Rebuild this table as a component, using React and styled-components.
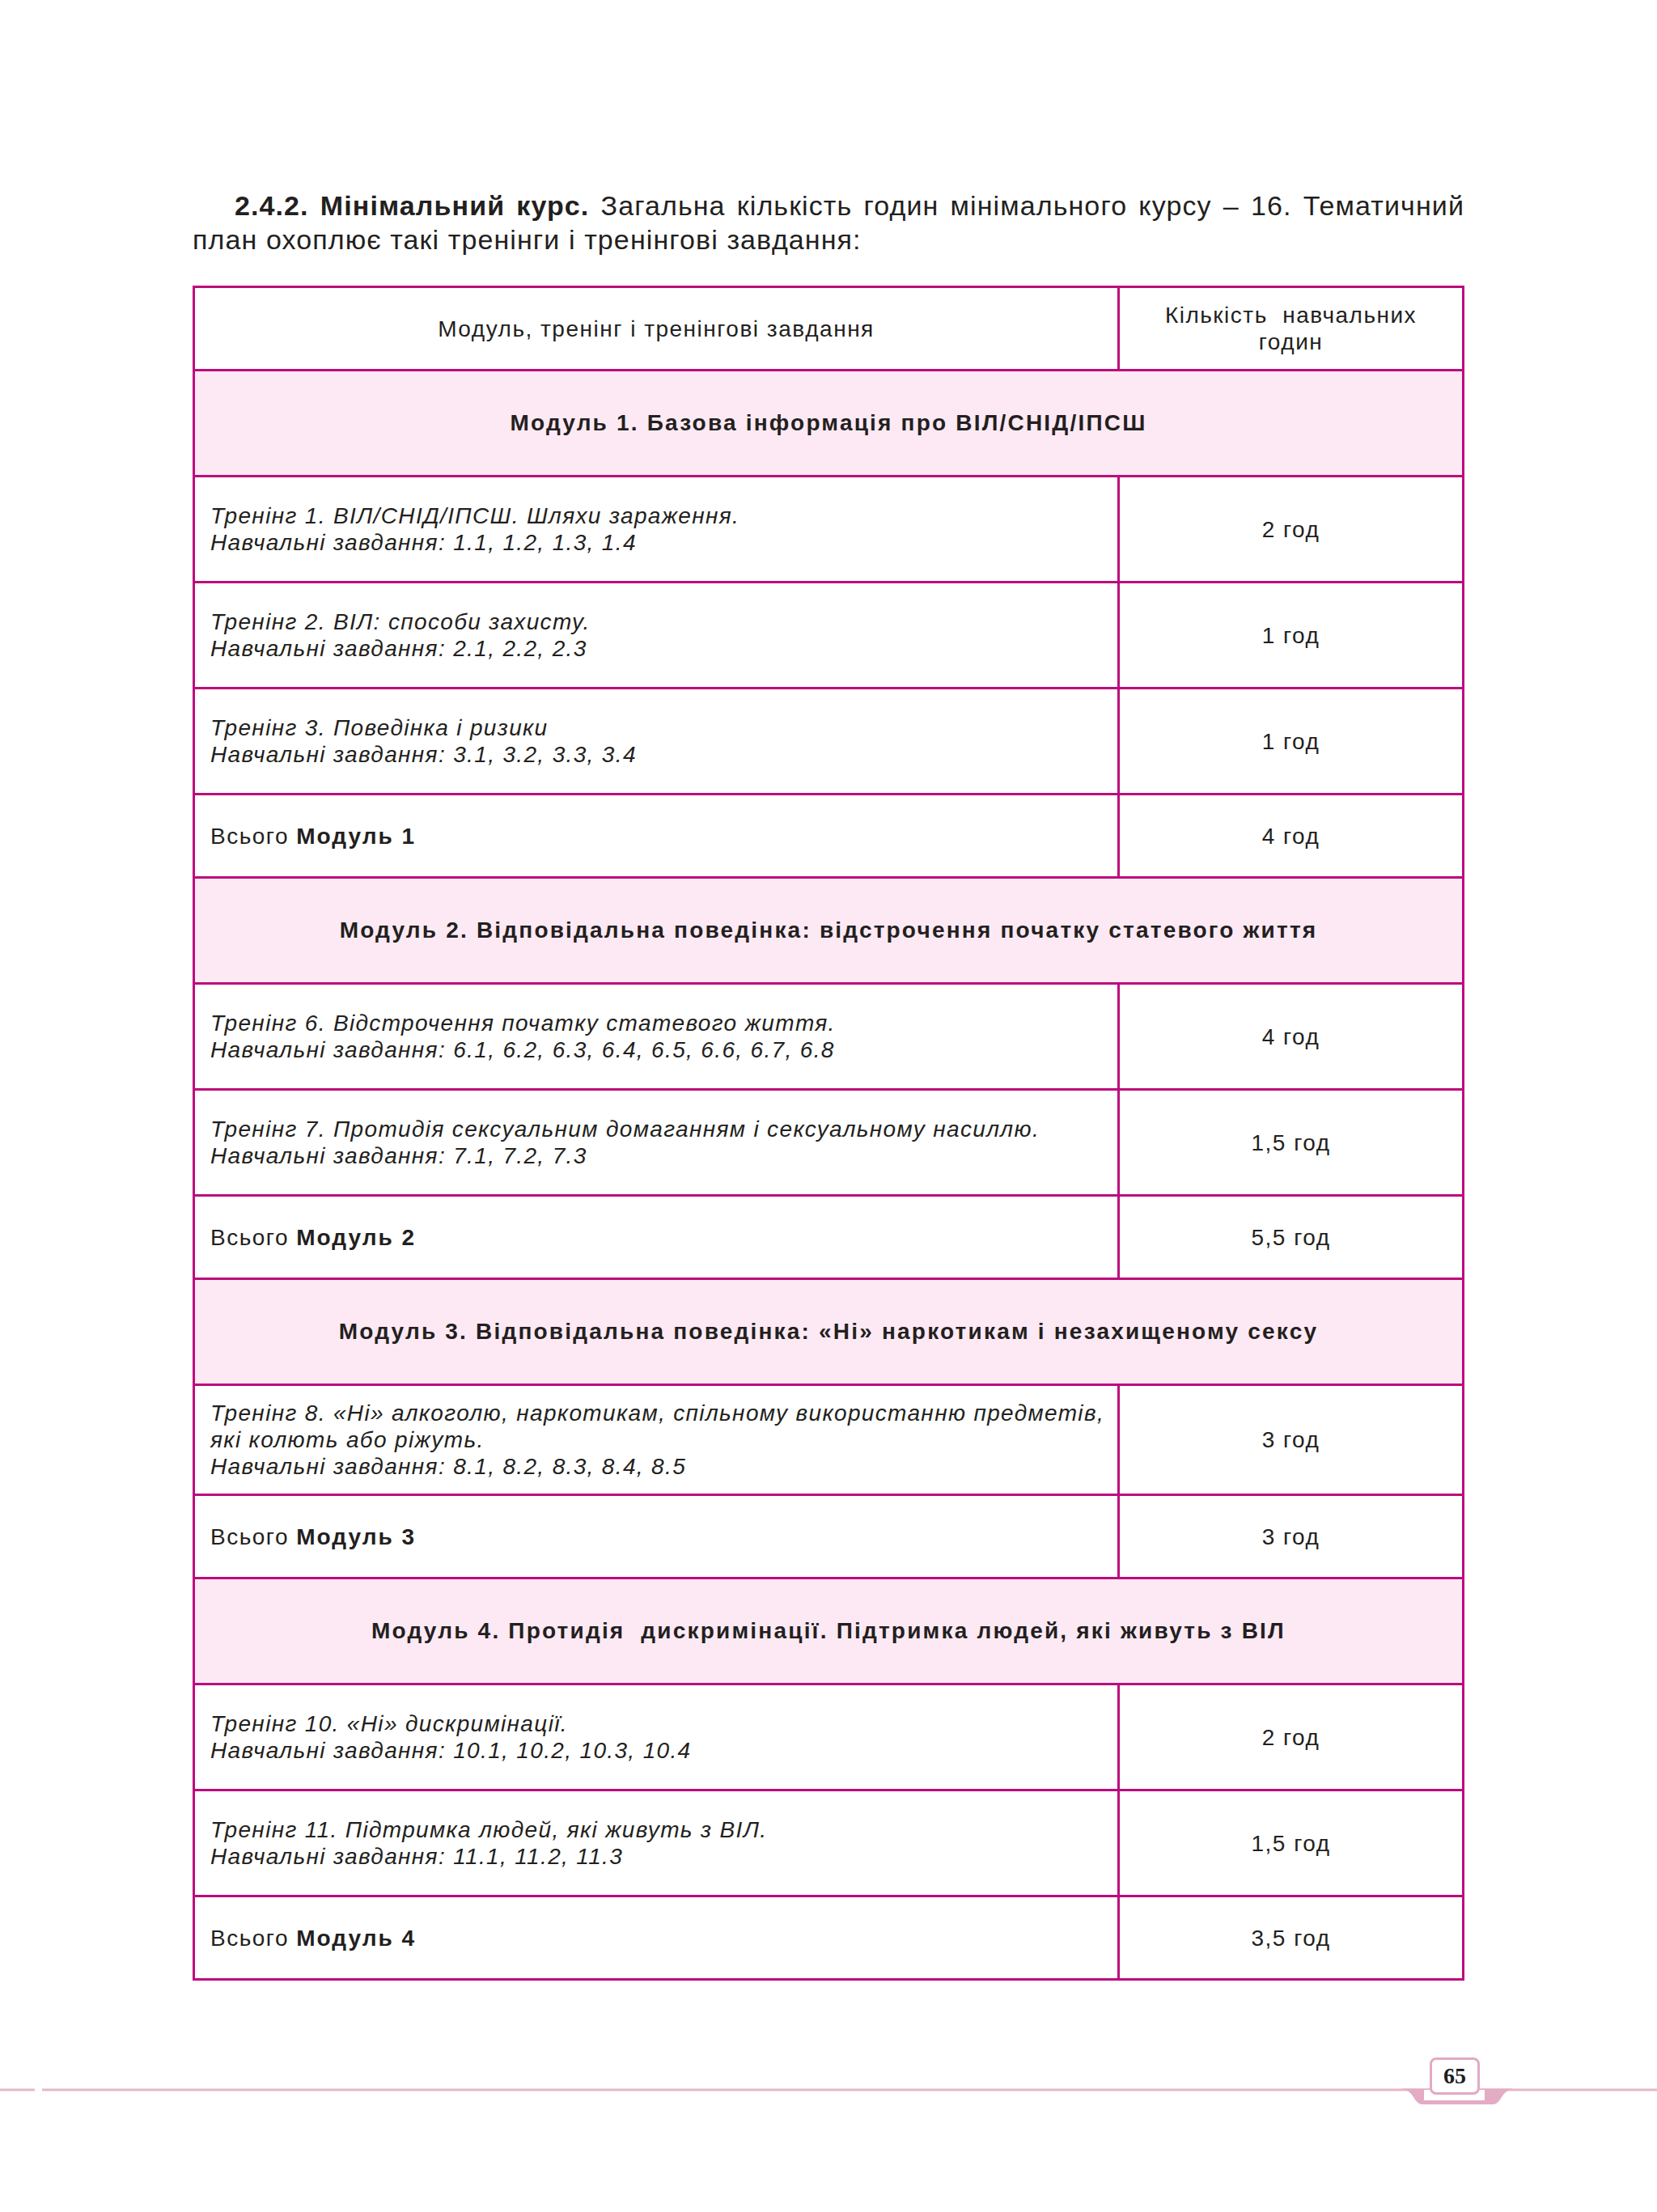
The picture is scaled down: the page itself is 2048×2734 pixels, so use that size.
import React from 'react';
import styled, { createGlobalStyle } from 'styled-components';

const MAGENTA = '#bd0a7c';
const PINK = '#fde9f4';
const INK = '#231f20';

const GlobalStyle = createGlobalStyle`
  html, body {
    margin: 0;
    padding: 0;
    background: #ffffff;
  }
  body {
    font-family: "Liberation Sans", Arial, sans-serif;
    color: ${INK};
  }
`;

const Sheet = styled.div`
  width: 2048px;
  min-height: 2734px;
  background: #fff;
  display: flex;
  flex-direction: column;
`;

const Content = styled.div`
  padding: 233px 238px 0 238px;
`;

const Lead = styled.p`
  margin: 0 0 36px 0;
  font-size: 34px;
  line-height: 42px;
  letter-spacing: 1.1px;
  color: ${INK};
`;

const LeadLine = styled.span`
  display: block;
  text-indent: ${(p) => (p.$indent ? '52px' : '0')};
  text-align: ${(p) => (p.$justify ? 'justify' : 'left')};
  text-align-last: ${(p) => (p.$justify ? 'justify' : 'auto')};
`;

const Table = styled.div`
  width: 1572px;
  box-sizing: border-box;
  border: 3px solid ${MAGENTA};
  display: flex;
  flex-direction: column;
`;

const Row = styled.div`
  display: grid;
  grid-template-columns: 1140px 1fr;
  height: ${(p) => p.$h}px;
  border-top: ${(p) => (p.$first ? 'none' : `3px solid ${MAGENTA}`)};
  background: ${(p) => (p.$pink ? PINK : '#fff')};
`;

const ModuleRow = styled.div`
  height: 128px;
  border-top: 3px solid ${MAGENTA};
  background: ${PINK};
  display: flex;
  align-items: center;
  justify-content: center;
  font-size: 28px;
  font-weight: 700;
  letter-spacing: 2.2px;
  white-space: pre;
`;

const Cell = styled.div`
  display: flex;
  flex-direction: column;
  justify-content: center;
  align-items: ${(p) => (p.$center ? 'center' : 'flex-start')};
  text-align: ${(p) => (p.$center ? 'center' : 'left')};
  padding: ${(p) => (p.$center ? '0 10px' : '0 0 0 19px')};
  border-left: ${(p) => (p.$divider ? `3px solid ${MAGENTA}` : 'none')};
  font-size: 28px;
  line-height: 33px;
  font-style: ${(p) => (p.$italic ? 'italic' : 'normal')};
  letter-spacing: ${(p) => (p.$italic ? '1.35px' : '1.5px')};
  white-space: pre;
`;

const Strong = styled.b`
  font-weight: 700;
`;

const TotalLabel = styled.b`
  font-weight: 700;
  letter-spacing: 2px;
`;

const Footer = styled.div`
  position: relative;
  margin-top: 82px;
  height: 80px;
`;

const Ornament = styled.svg`
  display: block;
`;

const PageNumber = styled.div`
  position: absolute;
  left: 1767px;
  top: 13px;
  width: 62px;
  height: 46px;
  box-sizing: border-box;
  border: 3px solid #e3a9c4;
  border-radius: 8px;
  background: #fff;
  display: flex;
  align-items: center;
  justify-content: center;
  font-family: "Liberation Serif", "Times New Roman", serif;
  font-weight: 700;
  font-size: 28px;
  color: #1e1e1e;
`;

const modules = [
  {
    title: 'Модуль 1. Базова інформація про ВІЛ/СНІД/ІПСШ',
    trainings: [
      { lines: ['Тренінг 1. ВІЛ/СНІД/ІПСШ. Шляхи зараження.', 'Навчальні завдання: 1.1, 1.2, 1.3, 1.4'], hours: '2 год' },
      { lines: ['Тренінг 2. ВІЛ: способи захисту.', 'Навчальні завдання: 2.1, 2.2, 2.3'], hours: '1 год' },
      { lines: ['Тренінг 3. Поведінка і ризики', 'Навчальні завдання: 3.1, 3.2, 3.3, 3.4'], hours: '1 год' },
    ],
    total: { label: 'Модуль 1', hours: '4 год' },
  },
  {
    title: 'Модуль 2. Відповідальна поведінка: відстрочення початку статевого життя',
    trainings: [
      { lines: ['Тренінг 6. Відстрочення початку статевого життя.', 'Навчальні завдання: 6.1, 6.2, 6.3, 6.4, 6.5, 6.6, 6.7, 6.8'], hours: '4 год' },
      { lines: ['Тренінг 7. Протидія сексуальним домаганням і сексуальному насиллю.', 'Навчальні завдання: 7.1, 7.2, 7.3'], hours: '1,5 год' },
    ],
    total: { label: 'Модуль 2', hours: '5,5 год' },
  },
  {
    title: 'Модуль 3. Відповідальна поведінка: «Ні» наркотикам і незахищеному сексу',
    trainings: [
      {
        lines: [
          'Тренінг 8. «Ні» алкоголю, наркотикам, спільному використанню предметів,',
          'які колють або ріжуть.',
          'Навчальні завдання: 8.1, 8.2, 8.3, 8.4, 8.5',
        ],
        hours: '3 год',
      },
    ],
    total: { label: 'Модуль 3', hours: '3 год' },
  },
  {
    title: 'Модуль 4. Протидія  дискримінації. Підтримка людей, які живуть з ВІЛ',
    trainings: [
      { lines: ['Тренінг 10. «Ні» дискримінації.', 'Навчальні завдання: 10.1, 10.2, 10.3, 10.4'], hours: '2 год' },
      { lines: ['Тренінг 11. Підтримка людей, які живуть з ВІЛ.', 'Навчальні завдання: 11.1, 11.2, 11.3'], hours: '1,5 год' },
    ],
    total: { label: 'Модуль 4', hours: '3,5 год' },
  },
];

function TrainingRow({ training }) {
  const tall = training.lines.length > 2;
  return (
    <Row $h={tall ? 133 : 128}>
      <Cell $italic>
        {training.lines.map((line) => (
          <span key={line}>{line}</span>
        ))}
      </Cell>
      <Cell $center $divider>{training.hours}</Cell>
    </Row>
  );
}

function ModuleBlock({ module }) {
  return (
    <>
      <ModuleRow>{module.title}</ModuleRow>
      {module.trainings.map((t) => (
        <TrainingRow key={t.lines[0]} training={t} />
      ))}
      <Row $h={100}>
        <Cell>
          <span>
            Всього <TotalLabel>{module.total.label}</TotalLabel>
          </span>
        </Cell>
        <Cell $center $divider>{module.total.hours}</Cell>
      </Row>
    </>
  );
}

function FooterOrnament() {
  return (
    <Ornament width="2048" height="80" viewBox="0 0 2048 80">
      <rect x="0" y="51.5" width="43" height="3" fill="#e6b6c9" />
      <rect x="52" y="51.5" width="1996" height="3" fill="#e6b6c9" />
      <path
        d="M1732 51.5 L1871 51.5 Q1862 52 1856 62 Q1851 71 1845 71 L1758 71 Q1752 71 1747 62 Q1741 52 1732 51.5 Z"
        fill="#e4abc5"
      />
      <rect x="1760" y="53" width="75" height="13" fill="#fff" />
    </Ornament>
  );
}

export default function App() {
  return (
    <>
      <GlobalStyle />
      <Sheet>
        <Content>
          <Lead>
            <LeadLine $indent $justify>
              <Strong>2.4.2. Мінімальний курс.</Strong> Загальна кількість годин мінімального курсу – 16. Тематичний
            </LeadLine>
            <LeadLine>план охоплює такі тренінги і тренінгові завдання:</LeadLine>
          </Lead>
          <Table>
            <Row $h={100} $first>
              <Cell $center>Модуль, тренінг і тренінгові завдання</Cell>
              <Cell $center $divider>
                <span>Кількість  навчальних</span>
                <span>годин</span>
              </Cell>
            </Row>
            {modules.map((m) => (
              <ModuleBlock key={m.title} module={m} />
            ))}
          </Table>
        </Content>
        <Footer>
          <FooterOrnament />
          <PageNumber>65</PageNumber>
        </Footer>
      </Sheet>
    </>
  );
}
